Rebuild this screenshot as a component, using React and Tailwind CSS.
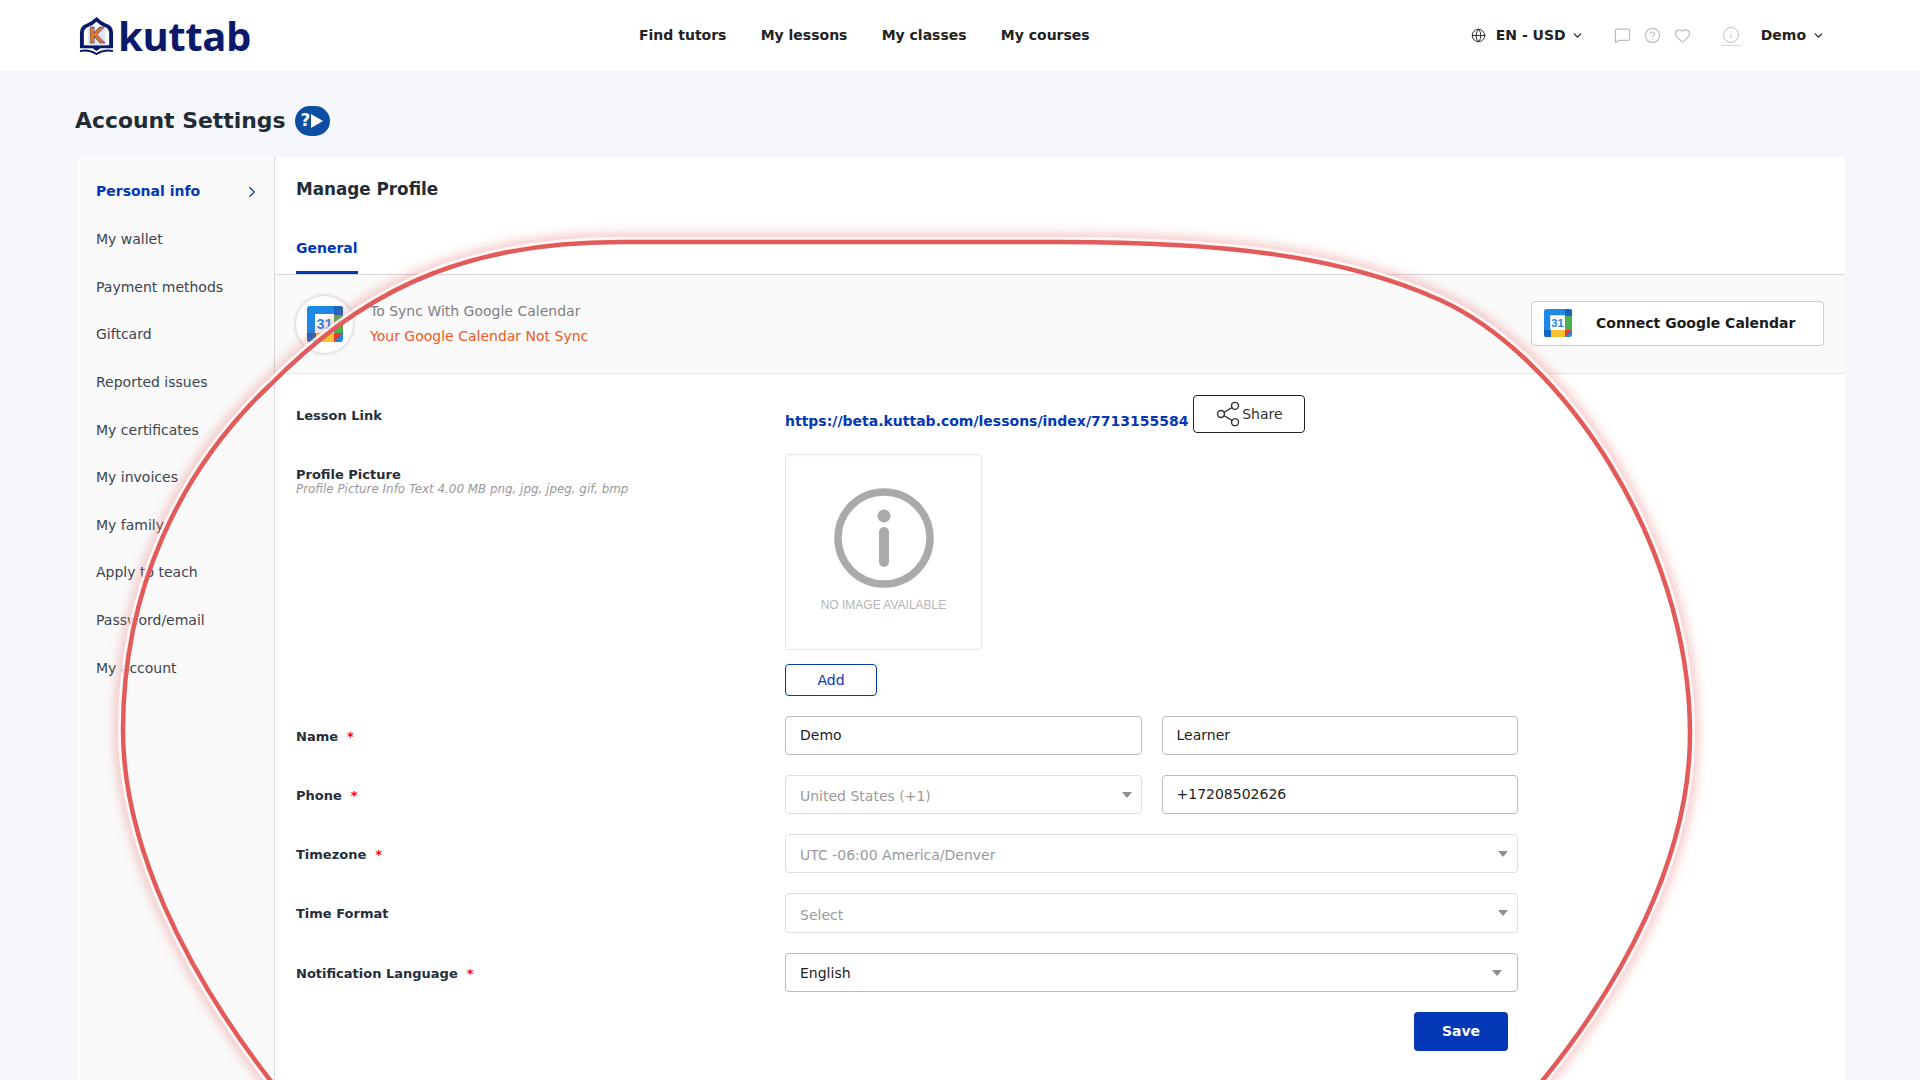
import { Globe, ChevronDown, ChevronRight, MessageSquare, CircleHelp, Heart, Info, Share2 } from "lucide-react"

const menu = ["My wallet", "Payment methods", "Giftcard", "Reported issues", "My certificates", "My invoices", "My family", "Apply to teach", "Password/email", "My account"]

// hand-drawn ring around the form
const ringPath =
  "M620 242 C450 242 355 300 270 385 C180 470 123 590 123 730 C123 845 185 970 270 1080 C340 1160 1470 1160 1543 1080 C1620 985 1690 860 1690 734 C1690 540 1560 354 1440 300 C1340 255 1220 242 1060 242 Z"

function CalendarIcon({ className }) {
  return (
    <svg viewBox="0 0 36 36" className={className}>
      <rect width="36" height="36" rx="3" fill="#1e88e5" />
      <path d="M27 0h6a3 3 0 0 1 3 3v6h-9z" fill="#1565c0" />
      <rect x="27" y="9" width="9" height="18" fill="#4caf50" />
      <rect x="9" y="27" width="18" height="9" fill="#fbc02d" />
      <path d="M0 27h9v9H3a3 3 0 0 1-3-3z" fill="#1565c0" />
      <path d="M27 27h9l-9 9z" fill="#e53935" />
      <rect x="8" y="8" width="19" height="19" fill="#fff" />
      <text x="17.5" y="23" textAnchor="middle" fontSize="14.5" fontWeight="700" fontFamily="Liberation Sans, sans-serif" fill="#1e88e5">31</text>
    </svg>
  )
}

function Caret({ className = "" }) {
  return <span className={`absolute top-1/2 -translate-y-1/2 border-x-[5px] border-t-[6px] border-x-transparent border-t-[#8f8f8f] ${className}`} />
}

function Row({ label, required, children }) {
  return (
    <div className="flex items-center">
      <div className="w-[489px] pt-[2px] text-[13px] font-bold text-[#252e3a]">
        {label}
        {required && <span className="ml-[9px] text-[#f00]">*</span>}
      </div>
      <div className="w-[733px]">{children}</div>
    </div>
  )
}

function SelectBox({ value, muted, tall, caretClass = "right-[9px]" }) {
  return (
    <div className={`relative flex items-center rounded border pl-[14px] text-[14px] ${tall ? "h-[40px]" : "h-[39px]"} ${muted ? "border-[#ddd] pt-[4px] text-[#9a9a9a]" : "border-[#bbb] pt-[1px] text-[#222]"}`}>
      {value}
      <Caret className={caretClass} />
    </div>
  )
}

function TextBox({ value }) {
  return (
    <input
      readOnly
      value={value}
      className="h-[39px] w-full rounded border border-[#bbb] pb-[1px] pl-[14px] text-[14px] text-[#222] outline-none"
    />
  )
}

function Ring() {
  return (
    <svg viewBox="0 0 1920 1080" className="pointer-events-none absolute left-0 top-0 h-[1080px] w-[1920px]">
      <defs>
        <filter id="soft" x="-10%" y="-10%" width="120%" height="120%">
          <feGaussianBlur stdDeviation="5" />
        </filter>
        <mask id="outside" maskUnits="userSpaceOnUse" x="0" y="0" width="1920" height="1080">
          <rect width="1920" height="1080" fill="#fff" />
          <path d={ringPath} fill="#000" />
        </mask>
      </defs>
      <g mask="url(#outside)" fill="none">
        <path d={ringPath} stroke="#e25555" strokeOpacity="0.28" strokeWidth="20" filter="url(#soft)" />
        <path d={ringPath} stroke="#fff" strokeOpacity="0.8" strokeWidth="10" />
      </g>
      <path d={ringPath} fill="none" stroke="#e35a5a" strokeWidth="4.5" />
    </svg>
  )
}

export default function App() {
  return (
    <div className="relative h-screen overflow-hidden bg-[#f6f7fb] font-['DejaVu_Sans',sans-serif]">
      <header className="flex h-[71px] items-center bg-white pl-[78px] pr-[95px]">
        <div className="flex w-[561px] items-center">
          <svg viewBox="0 0 38 40" className="h-[39px] w-[37px]">
            <path d="M2 33V17Q2 10 9 8Q14 6 19 1Q24 6 29 8Q36 10 36 17V33H23l-4 3-4-3z" fill="#0a1a6b" />
            <path d="M6 30V17q0-4 5-6 4-1 8-5 4 4 8 5 5 2 5 6v13z" fill="#fff" />
            <rect x="10" y="12" width="18" height="18" fill="#dfe6f5" />
            <text x="19" y="28" textAnchor="middle" fontSize="21" fontWeight="700" fontFamily="DejaVu Sans, sans-serif" fill="#e0782a" stroke="#0a1a6b" strokeWidth="0.4">K</text>
            <path d="M2 36q9-2 17 3 8-5 17-3" fill="none" stroke="#0a1a6b" strokeWidth="2" />
          </svg>
          <span className="ml-[3px] font-['Open_Sans',sans-serif] text-[40px] font-bold leading-none tracking-[-0.4px] text-[#0a1a6b]">kuttab</span>
        </div>
        <nav className="flex gap-[34.2px] text-[14px] font-bold text-[#222]">
          <span>Find tutors</span>
          <span>My lessons</span>
          <span>My classes</span>
          <span>My courses</span>
        </nav>
        <div className="ml-auto flex items-center text-[14px] font-bold text-[#222]">
          <Globe size={15} strokeWidth={1.5} />
          <span className="ml-[10px]">EN - USD</span>
          <ChevronDown size={13} strokeWidth={2.4} className="ml-[5px]" />
          <div className="ml-[30px] flex items-center gap-[13px] text-[#b8bcc4]">
            <MessageSquare size={17} strokeWidth={1.7} />
            <CircleHelp size={17} strokeWidth={1.7} />
            <Heart size={17} strokeWidth={1.7} />
          </div>
          <div className="ml-[30px] flex flex-col items-center text-[#b8bcc4]">
            <Info size={18} strokeWidth={1.3} />
            <span className="mt-[1px] h-[1px] w-[20px] bg-[#d5d5d5]" />
          </div>
          <span className="ml-[20px]">Demo</span>
          <ChevronDown size={13} strokeWidth={2.4} className="ml-[6px]" />
        </div>
      </header>

      <div className="px-[75px]">
        <div className="flex h-[86px] items-center gap-[9px] pt-[14px]">
          <h1 className="text-[21.9px] font-bold text-[#222b36]">Account Settings</h1>
          <span className="flex h-[30px] w-[35px] items-center justify-center gap-[1px] rounded-full bg-[#0b4ea2] text-[17px] font-bold text-white">
            ?
            <span className="border-y-[7px] border-l-[12px] border-y-transparent border-l-white" />
          </span>
        </div>

        <div className="flex h-[1000px]">
          <aside className="w-[200px] border-x border-l-[#f0f1f5] border-r-[#d8d8d8] bg-[#fafafa] pt-[10px] text-[14px] text-[#3c434e]">
            <div className="flex h-[49px] items-center justify-between pl-[20px] pr-[13px] font-bold text-[#0437b5]">
              Personal info
              <ChevronRight size={18} strokeWidth={1.5} />
            </div>
            {menu.map((item) => (
              <div key={item} className="flex h-[47.6px] items-center pl-[20px]">{item}</div>
            ))}
          </aside>

          <main className="flex-1 bg-white">
            <div className="h-[118px] border-b border-[#d8d8d8] pl-[21px] pt-[20px]">
              <h2 className="text-[16.8px] font-bold leading-[24px] text-[#222b36]">Manage Profile</h2>
              <div className="mt-[37px] h-[36px] w-[62px] border-b-[3px] border-[#0437b5] text-[14px] font-bold leading-[20px] text-[#0437b5]">General</div>
            </div>

            <div className="flex h-[99px] items-center justify-between border-b border-[#e6e6e6] bg-[#fafafa] px-[21px]">
              <div className="flex items-center">
                <span className="flex h-[57px] w-[57px] items-center justify-center rounded-full bg-white shadow-[0_0_4px_rgba(0,0,0,0.25)]">
                  <CalendarIcon className="h-[36px] w-[36px]" />
                </span>
                <div className="ml-[17px] text-[14px] leading-[25px]">
                  <p className="text-[#808080]">To Sync With Google Calendar</p>
                  <p className="text-[#f4581c]">Your Google Calendar Not Sync</p>
                </div>
              </div>
              <button className="mb-[2px] flex h-[45px] w-[293px] items-center rounded border border-[#ccc] bg-white pl-[12px] text-[14px] font-bold text-[#1a1a1a]">
                <CalendarIcon className="h-[28px] w-[28px]" />
                <span className="ml-[24px] pt-[1px]">Connect Google Calendar</span>
              </button>
            </div>

            <div className="flex flex-col gap-[20px] pl-[21px] pt-[21px]">
              <div className="flex flex-col">
                <div className="flex">
                  <div className="flex h-[38px] w-[489px] items-center pt-[4px] text-[13px] font-bold text-[#252e3a]">Lesson Link</div>
                  <div className="flex items-center">
                    <a className="mt-[14px] text-[14px] font-bold text-[#0437b5]">https://beta.kuttab.com/lessons/index/7713155584</a>
                    <button className="ml-[5px] flex h-[38px] w-[112px] items-center justify-center rounded border border-[#222] pr-[2px] text-[14px] text-[#333]">
                      <Share2 size={28} strokeWidth={1.2} />
                      Share
                    </button>
                  </div>
                </div>
                <div className="mt-[21px] flex">
                  <div className="w-[489px] pt-[13px]">
                    <p className="text-[13px] font-bold leading-[16px] text-[#252e3a]">Profile Picture</p>
                    <p className="text-[11.9px] italic leading-[13px] text-[#999]">Profile Picture Info Text 4.00 MB png, jpg, jpeg, gif, bmp</p>
                  </div>
                  <div>
                    <div className="flex h-[196px] w-[197px] flex-col items-center rounded border border-[#dfe3ef] pt-[33px]">
                      <svg viewBox="0 0 100 100" className="h-[100px] w-[100px]">
                        <circle cx="50" cy="50" r="46" fill="none" stroke="#aaa" strokeWidth="7.5" />
                        <circle cx="50" cy="28" r="6.5" fill="#aaa" />
                        <rect x="45" y="39" width="10" height="40" rx="5" fill="#aaa" />
                      </svg>
                      <span className="mt-[8px] font-['Liberation_Sans',sans-serif] text-[12px] text-[#b5b5b5]">NO IMAGE AVAILABLE</span>
                    </div>
                    <button className="mt-[14px] h-[32px] w-[92px] rounded border border-[#0437b5] text-[14px] text-[#0437b5]">Add</button>
                  </div>
                </div>
              </div>

              <Row label="Name" required>
                <div className="grid grid-cols-2 gap-[20px]">
                  <TextBox value="Demo" />
                  <TextBox value="Learner" />
                </div>
              </Row>
              <Row label="Phone" required>
                <div className="grid grid-cols-2 gap-[20px]">
                  <SelectBox value="United States (+1)" muted />
                  <TextBox value="+17208502626" />
                </div>
              </Row>
              <Row label="Timezone" required>
                <SelectBox value="UTC -06:00 America/Denver" muted />
              </Row>
              <Row label="Time Format">
                <SelectBox value="Select" muted tall />
              </Row>
              <Row label="Notification Language" required>
                <SelectBox value="English" caretClass="right-[15px]" />
              </Row>
              <div className="flex w-[1212px] justify-end">
                <button className="h-[39px] w-[94px] rounded bg-[#0437b5] text-[14px] font-bold text-white">Save</button>
              </div>
            </div>
          </main>
        </div>
      </div>

      <Ring />
    </div>
  )
}
